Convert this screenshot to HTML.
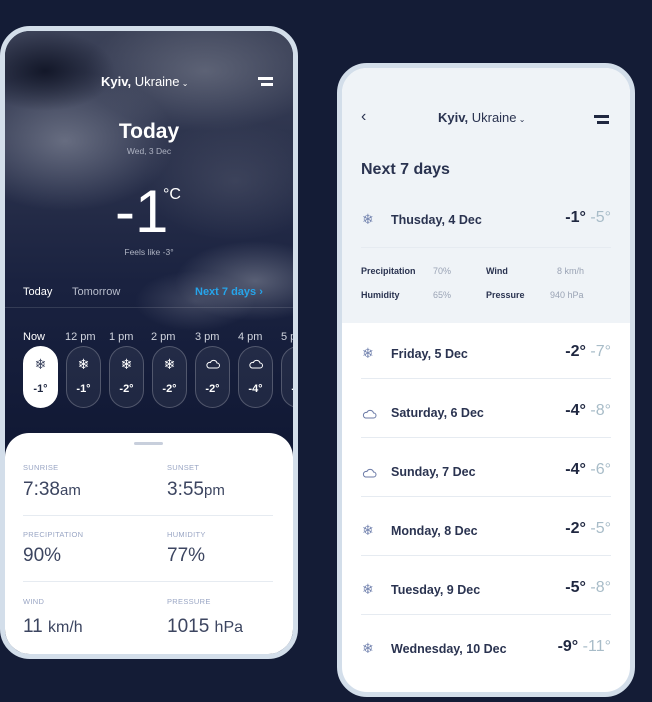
<!DOCTYPE html>
<html><head><meta charset="utf-8"><style>
*{margin:0;padding:0;box-sizing:border-box}
body{width:652px;height:702px;overflow:hidden;background:#141c36;font-family:"Liberation Sans","DejaVu Sans",sans-serif;position:relative}
.a{position:absolute;white-space:nowrap}
.ph{position:absolute;border:5px solid #d3deea;border-radius:30px;overflow:hidden}
#L{left:0;top:26px;width:298px;height:633px;background:#111a35}
#R{left:337px;top:63px;width:298px;height:634px;background:#fff}
.clouds{position:absolute;left:0;top:0;width:288px;height:420px;
background:
radial-gradient(ellipse 70px 40px at 40px 40px,rgba(10,14,30,.8),transparent),
radial-gradient(ellipse 110px 70px at 60px 110px,rgba(150,155,170,.55),transparent),
radial-gradient(ellipse 120px 60px at 200px 40px,rgba(130,135,150,.5),transparent),
radial-gradient(ellipse 90px 60px at 230px 150px,rgba(90,95,115,.4),transparent),
radial-gradient(ellipse 80px 40px at 250px 250px,rgba(140,145,160,.55),transparent),
radial-gradient(ellipse 60px 30px at 190px 270px,rgba(110,115,135,.45),transparent),
linear-gradient(#3c4258,#1a2240 60%,#101834)}
.w{color:#fff}
.pill{position:absolute;top:315px;width:35px;height:62px;border-radius:18px;border:1px solid rgba(255,255,255,.22);background:rgba(255,255,255,.06);color:#fff;text-align:center;font-size:11px;font-weight:bold}
.pill .i{position:absolute;top:9px;left:0;right:0;font-size:14px}
.pill .t{position:absolute;top:36px;left:0;right:0}
.hr{position:absolute;top:300px;font-size:11px;color:#d0d4de;white-space:nowrap}
.lab{font-size:7.5px;color:#9aa6c4;letter-spacing:.3px}
.val{font-size:19px;color:#3c4560}
.sep{position:absolute;height:1px;background:#e6ebf1}
.day{font-size:12.5px;color:#2a3350;font-weight:bold}
.ic{font-size:14px;color:#7585b0}
.hi{font-size:16px;font-weight:bold;color:#1f2740}
.lo{font-size:16px;color:#a8bcc8}
.sm{font-size:9px}
.up{position:absolute;left:0;top:-4px;width:288px;height:624px}
.tp{position:absolute;left:209px;width:60px;text-align:right}
</style></head><body>
<div class="ph" id="L">
<div class="clouds"></div>
<div class="a w" style="left:96px;top:43px;font-size:13px"><b>Kyiv,</b> Ukraine<span style="font-size:8px"> ⌄</span></div>
<div class="a" style="left:253px;top:46px;width:15px;height:2.5px;background:#fff"></div>
<div class="a" style="left:256px;top:52px;width:12px;height:2.5px;background:#fff"></div>
<div class="a w" style="left:0;width:288px;text-align:center;top:89px;font-size:21px;font-weight:bold">Today</div>
<div class="a" style="left:0;width:288px;text-align:center;top:115px;font-size:8.5px;color:#aeb3c2">Wed, 3 Dec</div>
<div class="a w" style="left:110px;top:146px;font-size:60px;font-weight:300;line-height:70px">-1</div>
<div class="a w" style="left:158px;top:155px;font-size:16px">°C</div>
<div class="a" style="left:0;width:288px;text-align:center;top:216px;font-size:8.5px;color:#aeb3c2">Feels like -3°</div>
<div class="a w" style="left:18px;top:255px;font-size:11px">Today</div>
<div class="a" style="left:67px;top:255px;font-size:11px;color:#b8bdcc">Tomorrow</div>
<div class="a" style="left:190px;top:255px;font-size:11px;color:#26a4ea;font-weight:bold">Next 7 days ›</div>
<div class="a" style="left:0;top:276px;width:288px;height:1px;background:rgba(255,255,255,.12)"></div>
<div class="hr" style="left:18px;color:#fff">Now</div>
<div class="hr" style="left:60px">12 pm</div>
<div class="hr" style="left:104px">1 pm</div>
<div class="hr" style="left:146px">2 pm</div>
<div class="hr" style="left:190px">3 pm</div>
<div class="hr" style="left:233px">4 pm</div>
<div class="hr" style="left:276px">5 pm</div>
<div class="pill" style="left:18px;background:#fff;color:#1f2740;border-color:#fff"><div class="i" style="color:#3c4560">❄</div><div class="t">-1°</div></div>
<div class="pill" style="left:61px"><div class="i">❄</div><div class="t">-1°</div></div>
<div class="pill" style="left:104px"><div class="i">❄</div><div class="t">-2°</div></div>
<div class="pill" style="left:147px"><div class="i">❄</div><div class="t">-2°</div></div>
<div class="pill" style="left:190px"><div class="i"><svg width="14" height="10" viewBox="0 0 14 10"><path d="M3 9h8a2.5 2.5 0 0 0 0-5 3.5 3.5 0 0 0-6.6-.5A2.7 2.7 0 0 0 3 9z" fill="none" stroke="#fff" stroke-width="1"/></svg></div><div class="t">-2°</div></div>
<div class="pill" style="left:233px"><div class="i"><svg width="14" height="10" viewBox="0 0 14 10"><path d="M3 9h8a2.5 2.5 0 0 0 0-5 3.5 3.5 0 0 0-6.6-.5A2.7 2.7 0 0 0 3 9z" fill="none" stroke="#fff" stroke-width="1"/></svg></div><div class="t">-4°</div></div>
<div class="pill" style="left:276px"><div class="i">❄</div><div class="t">-5°</div></div>
<div class="a" style="left:0;top:402px;width:288px;height:230px;background:#fff;border-radius:24px 24px 0 0"></div>
<div class="a" style="left:129px;top:411px;width:29px;height:3px;border-radius:2px;background:#c8cfdc"></div>
<div class="a lab" style="left:18px;top:432px">SUNRISE</div>
<div class="a lab" style="left:162px;top:432px">SUNSET</div>
<div class="a val" style="left:18px;top:448px">7:38<span style="font-size:15px">am</span></div>
<div class="a val" style="left:162px;top:448px">3:55<span style="font-size:15px">pm</span></div>
<div class="sep" style="left:18px;top:484px;width:250px"></div>
<div class="a lab" style="left:18px;top:499px">PRECIPITATION</div>
<div class="a lab" style="left:162px;top:499px">HUMIDITY</div>
<div class="a val" style="left:18px;top:514px">90%</div>
<div class="a val" style="left:162px;top:514px">77%</div>
<div class="sep" style="left:18px;top:550px;width:250px"></div>
<div class="a lab" style="left:18px;top:566px">WIND</div>
<div class="a lab" style="left:162px;top:566px">PRESSURE</div>
<div class="a val" style="left:18px;top:585px">11 <span style="font-size:16px">km/h</span></div>
<div class="a val" style="left:162px;top:585px">1015 <span style="font-size:16px">hPa</span></div>
</div>

<div class="ph" id="R">
<div class="a" style="left:0;top:0;width:288px;height:255px;background:#eff3f7"></div>
<div class="up">
<div class="a" style="left:19px;top:44px;font-size:16px;color:#2a3350">‹</div>
<div class="a" style="left:96px;top:46px;font-size:13px;color:#2a3350"><b>Kyiv,</b> Ukraine<span style="font-size:8px"> ⌄</span></div>
<div class="a" style="left:252px;top:51px;width:15px;height:2.5px;background:#1f2740"></div>
<div class="a" style="left:255px;top:57px;width:12px;height:2.5px;background:#1f2740"></div>
<div class="a" style="left:19px;top:97px;font-size:16px;font-weight:bold;color:#2a3350">Next 7 days</div>
<div class="a ic" style="left:20px;top:147px">❄</div>
<div class="a day" style="left:49px;top:149px">Thusday, 4 Dec</div>
<div class="a tp" style="top:145px"><span class="hi">-1°</span> <span class="lo">-5°</span></div>
<div class="sep" style="left:19px;top:183px;width:250px"></div>
<div class="a sm" style="left:19px;top:202px;color:#2a3350;font-weight:bold">Precipitation</div>
<div class="a sm" style="left:91px;top:202px;color:#9aa3b5">70%</div>
<div class="a sm" style="left:144px;top:202px;color:#2a3350;font-weight:bold">Wind</div>
<div class="a sm" style="left:215px;top:202px;color:#9aa3b5">8 km/h</div>
<div class="a sm" style="left:19px;top:226px;color:#2a3350;font-weight:bold">Humidity</div>
<div class="a sm" style="left:91px;top:226px;color:#9aa3b5">65%</div>
<div class="a sm" style="left:144px;top:226px;color:#2a3350;font-weight:bold">Pressure</div>
<div class="a sm" style="left:208px;top:226px;color:#9aa3b5">940 hPa</div>

<div class="a ic" style="left:20px;top:281px">❄</div>
<div class="a day" style="left:49px;top:283px">Friday, 5 Dec</div>
<div class="a tp" style="top:279px"><span class="hi">-2°</span> <span class="lo">-7°</span></div>
<div class="sep" style="left:19px;top:314px;width:250px"></div>
<div class="a" style="left:20px;top:342px"><svg width="15" height="10" viewBox="0 0 14 10"><path d="M3 9h8a2.5 2.5 0 0 0 0-5 3.5 3.5 0 0 0-6.6-.5A2.7 2.7 0 0 0 3 9z" fill="none" stroke="#6b7aa6" stroke-width="1"/></svg></div>
<div class="a day" style="left:49px;top:342px">Saturday, 6 Dec</div>
<div class="a tp" style="top:338px"><span class="hi">-4°</span> <span class="lo">-8°</span></div>
<div class="sep" style="left:19px;top:373px;width:250px"></div>
<div class="a" style="left:20px;top:401px"><svg width="15" height="10" viewBox="0 0 14 10"><path d="M3 9h8a2.5 2.5 0 0 0 0-5 3.5 3.5 0 0 0-6.6-.5A2.7 2.7 0 0 0 3 9z" fill="none" stroke="#6b7aa6" stroke-width="1"/></svg></div>
<div class="a day" style="left:49px;top:401px">Sunday, 7 Dec</div>
<div class="a tp" style="top:397px"><span class="hi">-4°</span> <span class="lo">-6°</span></div>
<div class="sep" style="left:19px;top:432px;width:250px"></div>
<div class="a ic" style="left:20px;top:458px">❄</div>
<div class="a day" style="left:49px;top:460px">Monday, 8 Dec</div>
<div class="a tp" style="top:456px"><span class="hi">-2°</span> <span class="lo">-5°</span></div>
<div class="sep" style="left:19px;top:491px;width:250px"></div>
<div class="a ic" style="left:20px;top:517px">❄</div>
<div class="a day" style="left:49px;top:519px">Tuesday, 9 Dec</div>
<div class="a tp" style="top:515px"><span class="hi">-5°</span> <span class="lo">-8°</span></div>
<div class="sep" style="left:19px;top:550px;width:250px"></div>
<div class="a ic" style="left:20px;top:576px">❄</div>
<div class="a day" style="left:49px;top:578px">Wednesday, 10 Dec</div>
<div class="a tp" style="top:574px"><span class="hi">-9°</span> <span class="lo">-11°</span></div>
</div>
</div>
</body></html>
